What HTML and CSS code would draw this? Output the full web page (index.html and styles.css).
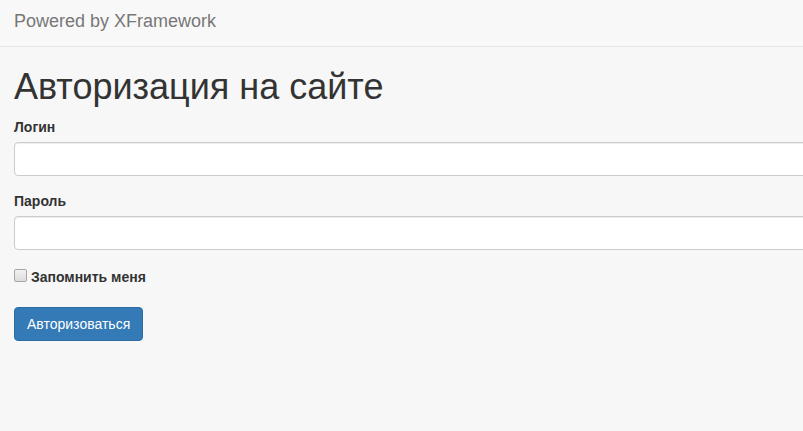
FILE: index.html
```html
<!DOCTYPE html>
<html lang="ru">
<head>
    <meta charset="UTF-8">
    <meta name="viewport" content="width=device-width, initial-scale=1.0">
    <title>Авторизация на сайте</title>
    <link rel="stylesheet" href="styles.css">
</head>
<body>
    <nav class="navbar">
        <a class="navbar-brand" href="#">Powered by XFramework</a>
    </nav>
    <div class="container">
        <h1>Авторизация на сайте</h1>
        <form action="/login" method="post">
            <div class="form-group">
                <label for="login">Логин</label>
                <input id="login" class="form-control" type="text" name="login">
            </div>
            <div class="form-group">
                <label for="password">Пароль</label>
                <input id="password" class="form-control" type="password" name="password">
            </div>
            <div class="form-group">
                <label><input type="checkbox" name="remember"> Запомнить меня</label>
            </div>
            <button class="btn btn-primary" type="submit">Авторизоваться</button>
        </form>
    </div>
</body>
</html>
```

FILE: styles.css
```css
* {
    box-sizing: border-box;
}
body {
    margin: 0;
    font-family: "Liberation Sans", Arial, Helvetica, sans-serif;
    font-size: 14px;
    line-height: 1.42857143;
    color: #333;
    background-color: #f7f7f7;
    overflow: hidden;
}
.navbar {
    height: 47px;
    background-color: #f8f8f8;
    border-bottom: 1px solid #e7e7e7;
}
.navbar-brand {
    display: inline-block;
    padding: 11px 15px 15px 14px;
    font-size: 18px;
    line-height: 20px;
    color: #777;
    text-decoration: none;
}
.container {
    width: 1170px;
    padding: 0 14px;
}
h1 {
    margin: 20px 0 10px;
    font-size: 36px;
    font-weight: 500;
    line-height: 1.1;
}
label {
    display: inline-block;
    max-width: 100%;
    margin-bottom: 5px;
    font-weight: bold;
}
.form-group {
    margin-bottom: 15px;
}
.form-control {
    display: block;
    width: 100%;
    height: 34px;
    padding: 6px 12px;
    font-family: inherit;
    font-size: 14px;
    line-height: 1.42857143;
    color: #555;
    background-color: #fff;
    border: 1px solid #ccc;
    border-radius: 4px;
    box-shadow: inset 0 1px 1px rgba(0, 0, 0, .075);
}
/* old-style grey checkbox */
input[type="checkbox"] {
    -webkit-appearance: none;
    appearance: none;
    display: inline-block;
    width: 13px;
    height: 13px;
    margin: 4px 0 0;
    padding: 0;
    line-height: normal;
    vertical-align: baseline;
    border: 1px solid #a6a6a6;
    border-radius: 2px;
    background: linear-gradient(#f2f2f2, #dcdcdc);
}
.btn {
    display: inline-block;
    padding: 6px 12px;
    font-family: inherit;
    font-size: 14px;
    line-height: 1.42857143;
    border: 1px solid transparent;
    border-radius: 4px;
    cursor: pointer;
}
.btn-primary {
    color: #fff;
    background-color: #337ab7;
    border-color: #2e6da4;
}
```
